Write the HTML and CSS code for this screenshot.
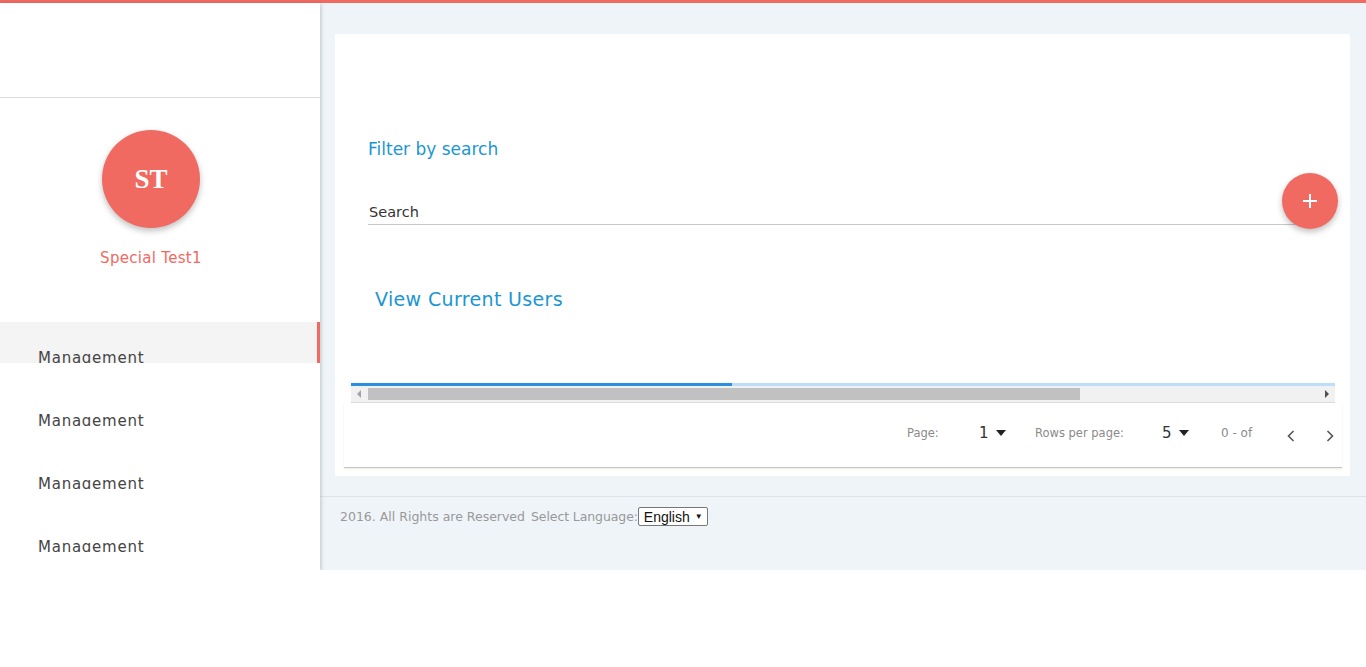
FILE: index.html
```html
<!DOCTYPE html>
<html>
<head>
<meta charset="utf-8">
<link rel="stylesheet" href="styles.css">
</head>
<body>
<div class="topbar"></div>
<div class="layout">
  <aside class="sidebar">
    <div class="side-head"></div>
    <div class="profile">
      <div class="avatar">ST</div>
      <div class="name">Special Test1</div>
    </div>
    <nav class="menu">
      <a class="item active">Management</a>
      <a class="item">Management</a>
      <a class="item">Management</a>
      <a class="item">Management</a>
    </nav>
  </aside>
  <main class="main">
    <section class="card">
      <div class="filter">Filter by search</div>
      <div class="search-field"><span class="search-label">Search</span></div>
      <button class="fab" aria-label="Add">
        <svg width="18" height="18" viewBox="0 0 18 18"><path d="M9 2v14M2 9h14" stroke="#fff" stroke-width="2" fill="none"/></svg>
      </button>
      <div class="view-users">View Current Users</div>
      <div class="table-wrap">
        <div class="progress"><div class="progress-fill"></div></div>
        <div class="hscroll">
          <span class="sb-btn"><svg width="6" height="8" viewBox="0 0 6 8"><path d="M4 0v8L0 4z" fill="#a3a3a3"/></svg></span>
          <div class="sb-track"><div class="sb-thumb"></div></div>
          <span class="sb-btn"><svg width="6" height="8" viewBox="0 0 6 8"><path d="M1 0v8l4-4z" fill="#505050"/></svg></span>
        </div>
        <div class="pagination">
          <span class="pg pg-page">Page:</span>
          <span class="pg pg-num1">1<i class="caret"></i></span>
          <span class="pg pg-rows">Rows per page:</span>
          <span class="pg pg-num5">5<i class="caret"></i></span>
          <span class="pg pg-range">0 - of</span>
          <span class="pg pg-nav pg-prev"><svg width="8" height="12" viewBox="0 0 8 12"><path d="M6.5 1L1.5 6l5 5" stroke="#555" stroke-width="1.6" fill="none"/></svg></span>
          <span class="pg pg-nav pg-next"><svg width="8" height="12" viewBox="0 0 8 12"><path d="M1.5 1l5 5-5 5" stroke="#555" stroke-width="1.6" fill="none"/></svg></span>
        </div>
      </div>
    </section>
    <footer class="footer">
      <span class="copy">2016. All Rights are Reserved</span>
      <span class="lang-label">Select Language:</span>
      <span class="lang-select">English <i class="lang-caret">&#9660;</i></span>
    </footer>
  </main>
</div>
</body>
</html>
```
FILE: styles.css
```css
* { box-sizing: border-box; }
html, body { margin: 0; padding: 0; background: #fff; }
body { font-family: "DejaVu Sans", "Open Sans", sans-serif; color: #333; }

.topbar { height: 3px; background: #f06a62; }

.layout {
  display: flex;
  height: 567px;
  background: #eff4f8;
}

.sidebar {
  width: 320px;
  flex: none;
  background: #fff;
  box-shadow: 1px 1px 4px rgba(0,0,0,0.2);
  position: relative;
  z-index: 2;
}
.side-head { height: 95px; border-bottom: 1px solid #dcdcdc; }
.profile { display: flex; flex-direction: column; align-items: center; padding: 32px 18px 0 0; }
.avatar {
  width: 98px; height: 98px; border-radius: 50%;
  background: #f06a62;
  box-shadow: 0 3px 6px rgba(0,0,0,0.25);
  display: flex; align-items: center; justify-content: center;
  font-family: "Liberation Serif", serif; font-weight: bold; font-size: 27px; color: #fff;
}
.name { margin-top: 20px; font-size: 15px; line-height: 20px; color: #f06a62; letter-spacing: 0.3px; }

.menu { margin-top: 54px; display: flex; flex-direction: column; gap: 22px; }
.item {
  display: block; height: 41px; overflow: hidden;
  padding: 26px 0 0 38px;
  font-size: 15px; line-height: 20px; color: #444; letter-spacing: 0.75px;
}
.item.active { background: #f4f4f4; border-right: 3px solid #f06a62; }

.main { flex: 1; min-width: 0; padding: 31px 16px 0 15px; display: flex; flex-direction: column; }

.card {
  position: relative;
  height: 442px;
  background: #fff;
  min-width: 0;
}
.filter { padding: 103px 0 0 33px; font-size: 17px; line-height: 24px; color: #1a96d4; }
.search-field {
  margin: 39px 40px 0 33px;
  height: 25px;
  border-bottom: 1px solid #c8c8c8;
  padding-left: 1px;
}
.search-label { font-size: 14.5px; line-height: 24px; color: #333; }
.fab {
  position: absolute; left: 947px; top: 139px;
  width: 56px; height: 56px; border-radius: 50%; border: 0;
  background: #f06a62;
  box-shadow: 0 3px 6px rgba(0,0,0,0.25);
  display: flex; align-items: center; justify-content: center; padding: 0;
}
.view-users { margin-top: 61px; padding-left: 40px; font-size: 19px; line-height: 26px; color: #1a96d4; letter-spacing: 0.35px; }

.table-wrap { margin: 71px 8px 0 9px; }
.progress { margin: 0 7px; height: 3px; background: #bbdefb; }
.progress-fill { width: 381px; height: 3px; background: #2990e0; }
.hscroll {
  margin: 0 7px;
  height: 17px; display: flex; background: #f1f1f1;
  border-bottom: 1px solid #dcdcdc;
}
.sb-btn { width: 17px; flex: none; display: flex; align-items: center; justify-content: center; }
.sb-track { flex: 1; padding: 2px 0; }
.sb-thumb { width: 712px; height: 12px; background: #c1c1c1; }

.pagination {
  display: flex; align-items: center;
  height: 65px;
  padding: 0 0 4px 563px;
  border-bottom: 1px solid #c4c4c4;
  box-shadow: 0 1px 2px rgba(0,0,0,0.08);
}
.pg { flex: none; font-size: 11.5px; color: #8a8a8a; display: flex; align-items: center; }
.pg-page { width: 72px; }
.pg-num1 { width: 56px; font-size: 15px; color: #333; }
.pg-rows { width: 127px; }
.pg-num5 { width: 59px; font-size: 15px; color: #333; }
.pg-range { width: 62px; font-size: 12px; }
.pg-nav { padding-top: 6px; }
.pg-prev { width: 30px; padding-left: 4px; }
.pg-next { width: 29px; padding-left: 13px; }
.caret {
  display: inline-block; margin-left: 7px;
  width: 0; height: 0;
  border-left: 5px solid transparent; border-right: 5px solid transparent;
  border-top: 6px solid #222;
}

.footer {
  margin: 20px -16px 0 -15px;
  border-top: 1px solid #dde3e8;
  padding: 10px 0 0 20px;
  display: flex; align-items: center;
  font-size: 12.5px; color: #999;
}
.copy { margin-right: 6px; }
.lang-label { letter-spacing: -0.1px; }
.lang-select {
  margin-left: 0;
  height: 19px; padding: 0 4px 0 5px;
  border: 1px solid #777; border-radius: 2px;
  background: #fff; color: #111; font-size: 14px;
  display: inline-flex; align-items: center;
  font-family: "Liberation Sans", sans-serif;
}
.lang-caret { font-style: normal; font-size: 8px; margin-left: 5px; }
```
